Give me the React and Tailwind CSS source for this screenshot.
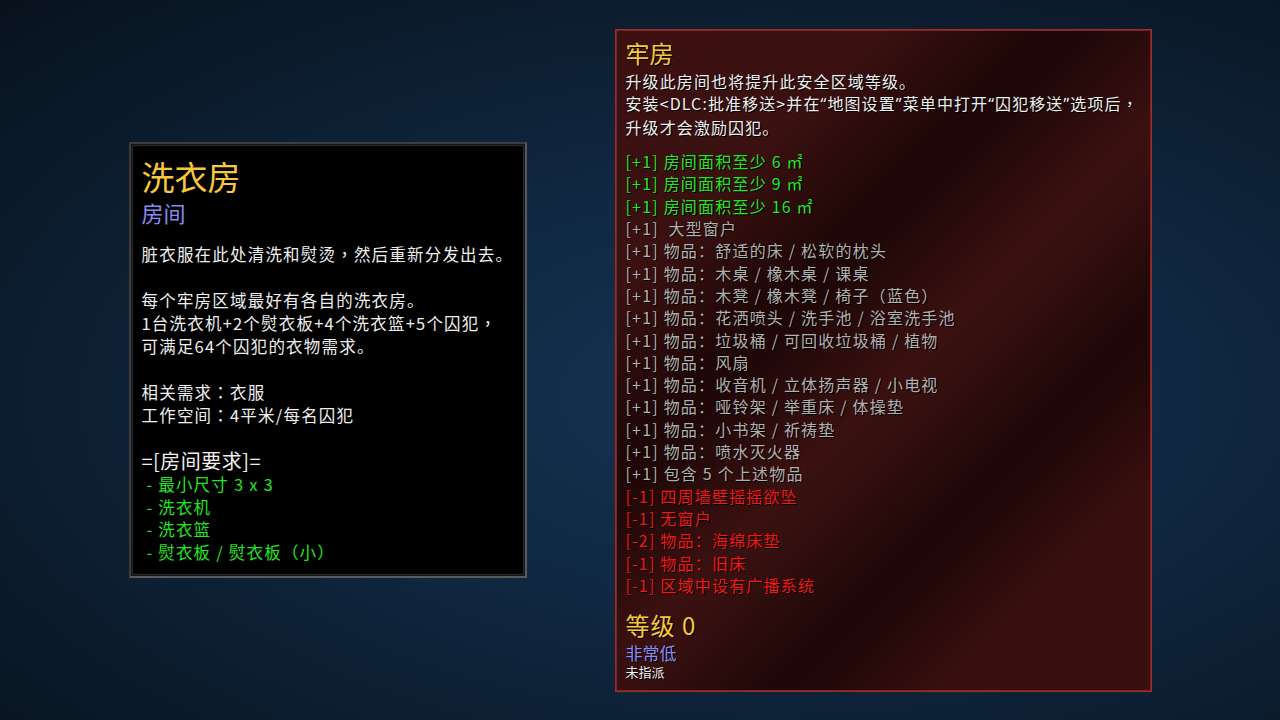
import React from "react";

const Q = ({ children }) => (
  <span style={{ fontFamily: '"Noto Sans", sans-serif' }}>{children}</span>
);
const TC = ({ children }) => (
  <span style={{ fontFamily: '"Noto Sans CJK TC", sans-serif' }}>{children}</span>
);

const green = [
  "[+1] 房间面积至少 6 ㎡",
  "[+1] 房间面积至少 9 ㎡",
  "[+1] 房间面积至少 16 ㎡",
];
const gray = [
  "[+1] \u00a0大型窗户",
  "[+1] 物品：舒适的床 / 松软的枕头",
  "[+1] 物品：木桌 / 橡木桌 / 课桌",
  "[+1] 物品：木凳 / 橡木凳 / 椅子（蓝色）",
  "[+1] 物品：花洒喷头 / 洗手池 / 浴室洗手池",
  "[+1] 物品：垃圾桶 / 可回收垃圾桶 / 植物",
  "[+1] 物品：风扇",
  "[+1] 物品：收音机 / 立体扬声器 / 小电视",
  "[+1] 物品：哑铃架 / 举重床 / 体操垫",
  "[+1] 物品：小书架 / 祈祷垫",
  "[+1] 物品：喷水灭火器",
  "[+1] 包含 5 个上述物品",
];
const red = [
  "[-1] 四周墙壁摇摇欲坠",
  "[-1] 无窗户",
  "[-2] 物品：海绵床垫",
  "[-1] 物品：旧床",
  "[-1] 区域中设有广播系统",
];

export default function App() {
  return (
    <div
      className="w-[1280px] h-[720px] flex items-center justify-center gap-[88px] bg-[radial-gradient(ellipse_at_60%_55%,#153453_0%,#0f263e_45%,#08121d_100%)] [text-shadow:1px_1px_0_#000] overflow-hidden"
      style={{ fontFamily: '"Noto Sans CJK SC", "Noto Sans", sans-serif' }}
    >
      {/* Left panel */}
      <div className="w-[398px] h-[436px] shrink-0 bg-black border-2 border-[#3d3d3d] border-b-[#5a5a5a] border-r-[#5a5a5a] shadow-[inset_0_0_0_1px_#141414,inset_0_0_0_2px_#2a2a2a] px-[11px] pt-[12px] text-[#eeeeee]">
        <div className="text-[33px] leading-[40px] text-[#f7c83c]">洗衣房</div>
        <div className="text-[22px] leading-[32px] text-[#8a8af2]">房间</div>
        <div className="mt-[15px] text-[16.5px] leading-[23px] tracking-[1.2px] whitespace-nowrap">
          <div>脏衣服在此处清洗和熨烫<TC>，</TC>然后重新分发出去。</div>
          <div className="h-[23px]" />
          <div>每个牢房区域最好有各自的洗衣房。</div>
          <div>1台洗衣机+2个熨衣板+4个洗衣篮+5个囚犯<TC>，</TC></div>
          <div>可满足64个囚犯的衣物需求。</div>
          <div className="h-[23px]" />
          <div>相关需求<TC>：</TC>衣服</div>
          <div>工作空间<TC>：</TC>4平米/每名囚犯</div>
        </div>
        <div className="mt-[21px] text-[20px] leading-[25px] tracking-[0.5px]">=[房间要求]=</div>
        <div className="text-[16.5px] leading-[22.7px] tracking-[1.2px] text-[#22e622] whitespace-pre">
          <div> - 最小尺寸 3 x 3</div>
          <div> - 洗衣机</div>
          <div> - 洗衣篮</div>
          <div> - 熨衣板 / 熨衣板<TC>（小）</TC></div>
        </div>
      </div>

      {/* Right panel */}
      <div className="w-[537px] h-[663px] shrink-0 border border-[#b82020] shadow-[inset_0_0_0_1px_#643030] bg-[linear-gradient(135deg,#3d1010_0px,#3a1010_190px,#200707_300px,#210808_340px,#3a1010_440px,#381010_470px,#200808_570px,#220808_610px,#3a0f0f_700px,#3a0f0f_848px)] px-[10px] pt-[9px] text-[#efefef]">
        <div className="text-[24px] leading-[28px] text-[#f7c83c]">牢房</div>
        <div className="mt-[3px] text-[16px] leading-[22.5px] tracking-[1.1px] whitespace-nowrap">
          <div>升级此房间也将提升此安全区域等级。</div>
          <div>
            安装&lt;DLC:批准移送&gt;并在<Q>“</Q>地图设置<Q>”</Q>菜单中打开<Q>“</Q>囚犯移送<Q>”</Q>选项后<TC>，</TC>
          </div>
          <div>升级才会激励囚犯。</div>
        </div>
        <div className="mt-[12px] text-[16px] leading-[22.32px] tracking-[1.2px]">
          {green.map((t, i) => (
            <div key={"g" + i} className="text-[#22e622] whitespace-pre">{t}</div>
          ))}
          {gray.map((t, i) => (
            <div key={"a" + i} className="text-[#b2afaf] whitespace-pre">{t}</div>
          ))}
          {red.map((t, i) => (
            <div key={"r" + i} className="text-[#f01818] whitespace-pre">{t}</div>
          ))}
        </div>
        <div className="mt-[14px] text-[24px] leading-[30px] tracking-[1px] text-[#f7c83c]">等级 0</div>
        <div className="mt-[2px] text-[17px] leading-[22px] text-[#8a8af2]">非常低</div>
        <div className="text-[13px] leading-[16px] text-[#efefef]">未指派</div>
      </div>
    </div>
  );
}
